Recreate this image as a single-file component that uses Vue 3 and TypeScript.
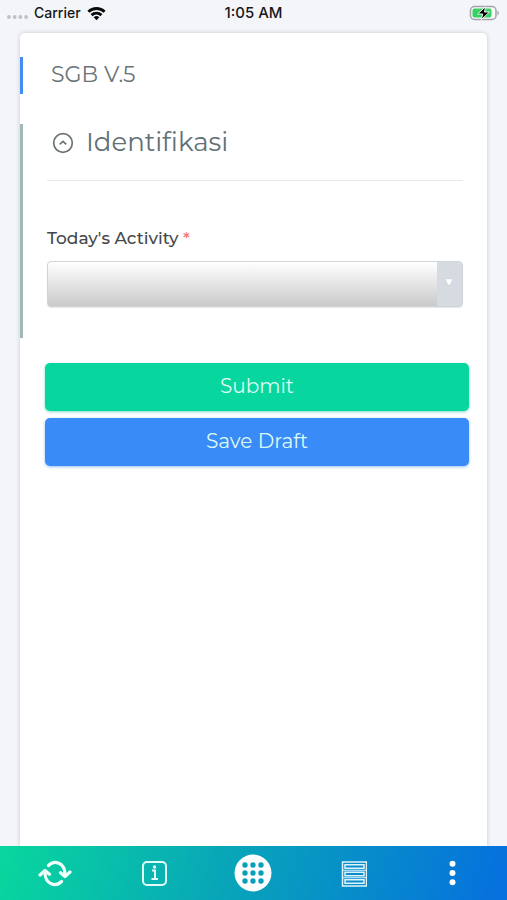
<script setup lang="ts">
import { ref } from 'vue'

const expanded = ref<boolean>(true)
const activity = ref<string>('')
const dots: number[] = [11, 19, 27]
</script>

<template>
  <div class="screen">
    <header class="status">
      <div class="status-left">
        <svg class="signal" viewBox="0 0 22 6" aria-hidden="true">
          <circle v-for="n in 4" :key="n" :cx="n * 6 - 4" cy="3" r="2" fill="#bfc1c6" />
        </svg>
        <span>Carrier</span>
        <svg class="wifi" viewBox="0 0 20 15" fill="none" stroke="#090a0c" stroke-width="3" aria-hidden="true">
          <path d="M1.5 5.6a12.3 12.3 0 0 1 17 0" />
          <path d="M4.8 9.2a7.6 7.6 0 0 1 10.4 0" />
          <path d="M10 14.5 7 11.5a4.4 4.4 0 0 1 6 0z" fill="#090a0c" stroke="none" />
        </svg>
      </div>
      <span class="clock">1:05 AM</span>
      <div class="status-right">
        <svg class="battery" viewBox="0 0 31 16" aria-hidden="true">
          <rect x="1.5" y="1.5" width="25.5" height="13" rx="4" fill="#f8fafb" stroke="#a1a3a8" stroke-width="1.5" />
          <path d="M28.5 5.5c1.8.8 1.8 4.2 0 5z" fill="#a1a3a8" />
          <rect x="3.5" y="3.5" width="19" height="9" rx="2" fill="#36d260" />
          <path d="M16.5 1.7 8.7 9h5l-1.4 5.7L20.5 7h-5z" fill="#000" stroke="#effaf2" stroke-width="1" />
        </svg>
      </div>
    </header>

    <main class="card">
      <h1 class="title">SGB V.5</h1>
      <section class="group">
        <h2 class="group-head">
          <button class="toggle" type="button" :aria-expanded="expanded" @click="expanded = !expanded">
            <svg class="chevron" viewBox="0 0 22 22" fill="none" stroke="#6c7376" stroke-width="1.7" aria-hidden="true">
              <circle cx="11" cy="11" r="9.3" />
              <path d="m7.7 12.3 3.3-3 3.3 3" />
            </svg>
            <span>Identifikasi</span>
          </button>
        </h2>
        <div v-show="expanded" class="field">
          <label class="label" for="activity">Today's Activity <span class="required">*</span></label>
          <div class="select-wrap">
            <select id="activity" v-model="activity" class="select" required>
              <option value=""></option>
            </select>
            <span class="select-arrow">
              <svg viewBox="0 0 10 9" aria-hidden="true"><path d="M.5.8h9L5 8.3z" fill="#fff" stroke="#c0c4c8" stroke-width=".5" /></svg>
            </span>
          </div>
        </div>
      </section>
      <div class="actions">
        <button class="action submit" type="button">Submit</button>
        <button class="action draft" type="button">Save Draft</button>
      </div>
    </main>

    <nav class="tabs">
      <button class="tab" type="button" aria-label="Refresh">
        <svg class="wide-icon" viewBox="0 0 34 28" fill="none" stroke="#effffb" stroke-width="3.2" stroke-linecap="round" stroke-linejoin="round">
          <path d="M10.5 6.5C16.5.5 26.5 4 27 14.500" />
          <path d="M23.500 22.500C17.500 28.500 7.500 25 7 14.500" />
          <path d="m22.500 13.800 4.500 3.700 5-4.500M2 16l5-4.500 4.500 3.700" />
        </svg>
      </button>
      <button class="tab" type="button" aria-label="Information">
        <svg class="icon" viewBox="0 0 28 28" fill="none" stroke="#e3fbf8">
          <rect x="3" y="3" width="23" height="23" rx="4" stroke-width="2" />
          <path d="M12 11.5h3V20m-3.5 0h6.500" stroke-width="2" />
          <circle cx="14.5" cy="8" r="1.7" fill="#e3fbf8" stroke="none" />
        </svg>
      </button>
      <button class="tab" type="button" aria-label="Menu">
        <svg class="menu-icon" viewBox="0 0 38 38">
          <circle cx="19" cy="19" r="18.5" fill="#fff" />
          <g fill="#079fb9">
            <template v-for="y in dots" :key="y">
              <circle v-for="x in dots" :key="x" :cx="x" :cy="y" r="2.7" />
            </template>
          </g>
        </svg>
      </button>
      <button class="tab" type="button" aria-label="List">
        <svg class="icon" viewBox="0 0 28 28" fill="none" stroke="#dff4fc" stroke-width="1.5">
          <path d="M3.500 3h24v24h-24z" />
          <path d="M6 5.800h19v3.400H6zM6 13.300h19v3.400H6zM6 20.800h19v3.400H6z" />
          <path d="M3.500 11.250h24M3.500 18.750h24" stroke-width="1" />
        </svg>
      </button>
      <button class="tab" type="button" aria-label="More">
        <svg class="icon" viewBox="0 0 28 28" fill="#fff">
          <circle cx="14.5" cy="4.700" r="3" />
          <circle cx="14.5" cy="14" r="3" />
          <circle cx="14.5" cy="23.300" r="3" />
        </svg>
      </button>
    </nav>
  </div>
</template>

<style>
body {
  margin: 0;
  background: #f3f5f9;
}
</style>

<style scoped>
.screen {
  box-sizing: border-box;
  display: flex;
  flex-direction: column;
  min-height: 100vh;
  background: #f3f5f9;
  font-family: Montserrat, Inter, sans-serif;
}

.status {
  display: grid;
  grid-template-columns: 1fr auto 1fr;
  align-items: center;
  height: 26px;
  margin-bottom: 7px;
  padding: 0 7px;
  color: #17181a;
  font: 500 14px/26px Inter, sans-serif;
}

.clock {
  font-size: 15px;
}

.status-left {
  display: flex;
  align-items: center;
  gap: 6px;
}

.status-right {
  display: flex;
  justify-content: flex-end;
}

.signal {
  width: 21px;
  height: 6px;
  margin-top: 8px;
}

.wifi {
  width: 19px;
  height: 15px;
}

.battery {
  width: 31px;
  height: 16px;
}

.card {
  flex: 1;
  margin: 0 20px;
  padding-top: 24px;
  border-radius: 5px 5px 0 0;
  background: #fff;
  box-shadow: 0 0 4px rgba(60, 70, 90, 0.25);
}

.title {
  margin: 0 0 30px;
  padding: 0 0 2px 28px;
  border-left: 3px solid #458cf2;
  color: #6a7478;
  font-size: 22px;
  font-weight: 400;
  line-height: 35px;
}

.group {
  padding: 0 24px 31px;
  border-left: 3px solid #a3b9b8;
}

.group-head {
  margin: 0 0 46px;
  padding: 0 0 20px 5px;
  border-bottom: 1px solid #e6e8e9;
  font-weight: 400;
}

.toggle {
  display: flex;
  align-items: center;
  gap: 12px;
  padding: 0;
  border: 0;
  background: none;
  color: #607075;
  font: inherit;
  font-size: 26px;
  line-height: 36px;
  cursor: pointer;
}

.chevron {
  width: 22px;
  height: 22px;
  margin-top: 2px;
}

.label {
  display: block;
  margin-bottom: 12px;
  color: #44484a;
  font-size: 17px;
  font-weight: 500;
  line-height: 22px;
}

.required {
  color: #f27670;
}

.select-wrap {
  display: grid;
  grid-template-columns: 1fr 26px;
  height: 46px;
}

.select {
  grid-area: 1 / 1 / 2 / 3;
  width: 100%;
  height: 100%;
  padding: 0 36px 0 10px;
  border: 1px solid #d0d4d6;
  border-radius: 4px;
  appearance: none;
  background: linear-gradient(#fff, #cacaca);
  box-shadow: 0 1px 1px #e4e6e8;
  font: inherit;
  font-size: 17px;
}

.select-arrow {
  grid-area: 1 / 2;
  display: flex;
  align-items: center;
  justify-content: center;
  margin: 1px 1px 1px 0;
  padding: 0 2px 4px 0;
  border-radius: 0 3px 3px 0;
  background: #d5dbe1;
  pointer-events: none;
}

.select-arrow svg {
  width: 10px;
  height: 9px;
}

.actions {
  display: flex;
  flex-direction: column;
  gap: 7px;
  padding: 25px 18px 24px 25px;
}

.action {
  height: 48px;
  padding: 0 0 2px;
  border: 0;
  border-radius: 5px;
  color: #dcfaf5;
  font: inherit;
  font-size: 20px;
  font-weight: 400;
  cursor: pointer;
}

.submit {
  background: #07d79e;
  box-shadow: 0 1px 3px rgba(7, 190, 160, 0.5);
}

.draft {
  background: #398bf7;
  box-shadow: 0 1px 3px rgba(40, 130, 230, 0.5);
}

.tabs {
  position: sticky;
  bottom: 0;
  display: grid;
  grid-template-columns: repeat(5, 1fr);
  height: 54px;
  padding: 0 5px;
  background: linear-gradient(105deg, #08d79d 0%, #08a5b9 45%, #0672dd 97%);
}

.tab {
  display: flex;
  align-items: center;
  justify-content: center;
  padding: 0;
  border: 0;
  background: none;
  cursor: pointer;
}

.wide-icon {
  width: 34px;
  height: 28px;
}

.icon {
  width: 28px;
  height: 28px;
}

.menu-icon {
  width: 38px;
  height: 38px;
}
</style>
